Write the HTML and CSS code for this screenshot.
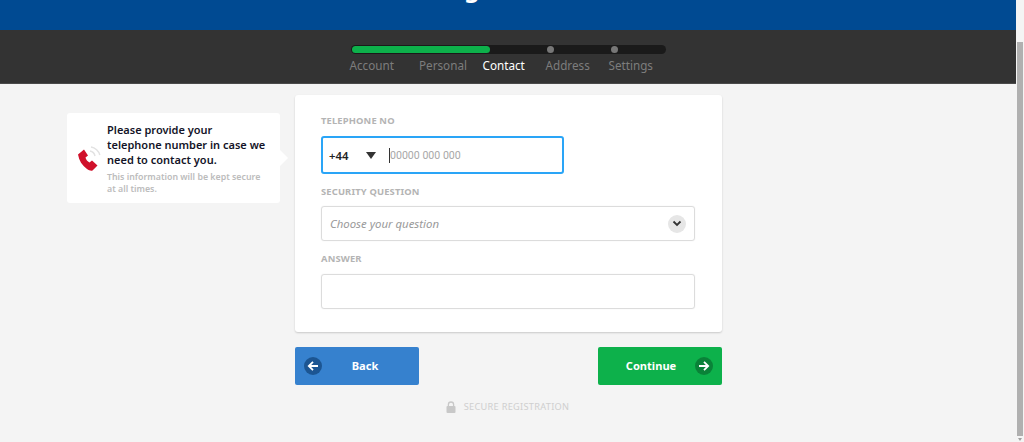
FILE: index.html
```html
<!DOCTYPE html>
<html>
  <head>
    <title>Secure Registration</title>
    <link rel="stylesheet" href="styles.css">
  </head>
  <body>
    <div class="page">
      <div class="page-content">
        <header class="top-bar">
          <h1>Registration</h1>
        </header>

        <nav class="steps-bar">
          <div class="steps">
            <div class="progress">
              <div class="progress-fill"></div>
              <span class="dot dot-address"></span>
              <span class="dot dot-settings"></span>
            </div>
            <div class="step-labels">
              <span class="step step-account">Account</span>
              <span class="step step-personal">Personal</span>
              <span class="step step-contact active">Contact</span>
              <span class="step step-address">Address</span>
              <span class="step step-settings">Settings</span>
            </div>
          </div>
        </nav>

        <main class="main">
          <aside class="tip">
            <svg class="tip-icon" width="24" height="26" viewBox="0 0 24 26">
              <path d="M1 8.5 L7 3.5 L11 9.5 L8.5 11.5 C9 13.5 10.5 15.5 12.5 16.5 L15 14.5 L20.5 19.5 L15.5 24.5 C14 25 12 24.5 10 23 C5 19.5 2 14.5 1 8.5 Z" fill="#d0112b"/>
              <path d="M13 5 C15.5 5.5 17.5 7.5 18 10 M14 1 C18 1.5 22 5 22.8 9" fill="none" stroke="#e2e2e2" stroke-width="1.5"/>
            </svg>
            <div class="tip-text">
              <p class="tip-title">Please provide your telephone number in case we need to contact you.</p>
              <p class="tip-note">This information will be kept secure at all times.</p>
            </div>
          </aside>

          <div class="form-column">
            <form class="card">
              <label class="field-label">TELEPHONE NO</label>
              <div class="phone-input">
                <span class="dial-code">+44</span>
                <span class="dial-arrow"></span>
                <span class="caret"></span>
                <input type="text" placeholder="00000 000 000">
              </div>

              <label class="field-label">SECURITY QUESTION</label>
              <div class="text-box select-box">
                <span class="select-placeholder">Choose your question</span>
                <span class="select-chevron">
                  <svg width="10" height="7" viewBox="0 0 10 7">
                    <path d="M1.5 1.5 L5 5 L8.5 1.5" fill="none" stroke="#333" stroke-width="1.8"/>
                  </svg>
                </span>
              </div>

              <label class="field-label">ANSWER</label>
              <div class="text-box answer-box"></div>
            </form>

            <div class="actions">
              <button type="button" class="btn btn-back">
                <span class="btn-icon">
                  <svg width="12" height="12" viewBox="0 0 12 12">
                    <path d="M11 6 H2 M6 1.8 L1.8 6 L6 10.2" fill="none" stroke="#fff" stroke-width="1.8"/>
                  </svg>
                </span>
                <span class="btn-text">Back</span>
              </button>
              <button type="button" class="btn btn-continue">
                <span class="btn-text">Continue</span>
                <span class="btn-icon">
                  <svg width="12" height="12" viewBox="0 0 12 12">
                    <path d="M1 6 H10 M6 1.8 L10.2 6 L6 10.2" fill="none" stroke="#fff" stroke-width="1.8"/>
                  </svg>
                </span>
              </button>
            </div>

            <div class="secure">
              <svg width="10" height="12" viewBox="0 0 10 12">
                <path d="M2.4 5.5 V3.6 a2.6 2.6 0 0 1 5.2 0 V5.5" fill="none" stroke="#c8c8c8" stroke-width="1.3"/>
                <rect x="0.5" y="5" width="9" height="7" rx="1" fill="#c8c8c8"/>
              </svg>
              <span>SECURE REGISTRATION</span>
            </div>
          </div>
        </main>
      </div>

      <div class="scrollbar">
        <div class="scroll-thumb"></div>
        <div class="scroll-arrow"></div>
      </div>
    </div>
  </body>
</html>
```

FILE: styles.css
```css
html,
body {
  height: 100%;
  margin: 0;
  overflow: hidden;
}
body {
  background-color: #f4f4f4;
  font-family: "Noto Sans", "Open Sans", sans-serif;
  color: #1a1a1a;
}
.page {
  display: flex;
  height: 442px;
}
.page-content {
  flex: 1;
  min-width: 0;
}

/* header */
.top-bar {
  height: 30px;
  overflow: hidden;
  background-color: #004a92;
  text-align: center;
}
.top-bar h1 {
  margin: -27px 0 0;
  font-size: 24px;
  line-height: 30px;
  font-weight: 700;
  color: #fff;
}
.steps-bar {
  height: 53px;
  background-color: #333;
  border-bottom: 1px solid #4a4a4a;
  display: flex;
  justify-content: center;
}
.steps {
  width: 315px;
  padding-top: 15px;
}
.progress {
  position: relative;
  height: 9px;
  background-color: #1a1a1a;
  border-radius: 5px;
}
.progress-fill {
  position: absolute;
  left: 1px;
  top: 1px;
  width: 138px;
  height: 7px;
  background-color: #0db14b;
  border-radius: 4px;
}
.dot {
  position: absolute;
  top: 1px;
  width: 7px;
  height: 7px;
  background-color: #777;
  border-radius: 50%;
}
.dot-address {
  left: 196px;
}
.dot-settings {
  left: 260px;
}
.step-labels {
  display: flex;
  margin-top: 2px;
  font-size: 11.7px;
  line-height: 18px;
  color: #7d7d7d;
}
.step-account {
  width: 69.5px;
  margin-left: -1px;
}
.step-personal {
  width: 63.5px;
}
.step-contact {
  width: 63px;
}
.step-address {
  width: 63px;
}
.step.active {
  color: #fff;
}

/* main area */
.main {
  display: flex;
  align-items: flex-start;
  padding: 11px 0 0 67px;
}
.tip {
  position: relative;
  display: flex;
  align-items: center;
  width: 213px;
  height: 90px;
  box-sizing: border-box;
  margin-top: 18px;
  margin-right: 15px;
  padding-left: 10px;
  background-color: #fff;
  border-radius: 3px;
}
.tip::after {
  content: "";
  position: absolute;
  right: -8px;
  top: 37px;
  border-left: 8px solid #fff;
  border-top: 8px solid transparent;
  border-bottom: 8px solid transparent;
}
.tip-icon {
  flex: none;
  margin-right: 6px;
  margin-top: 2px;
}
.tip-text {
  width: 160px;
}
.tip-title {
  margin: 0;
  font-size: 11px;
  line-height: 15px;
  font-weight: 600;
  color: #141428;
}
.tip-note {
  margin: 4px 0 0;
  font-size: 8.8px;
  line-height: 12px;
  font-weight: 600;
  color: #bcbcbc;
}
.form-column {
  width: 427px;
}
.card {
  height: 237px;
  box-sizing: border-box;
  padding: 19px 27px 0 26px;
  background-color: #fff;
  border-radius: 3px;
  box-shadow: 0 1px 2px rgba(0, 0, 0, 0.18);
}
.field-label {
  display: block;
  font-size: 9.4px;
  line-height: 14px;
  font-weight: 700;
  letter-spacing: 0.15px;
  color: #b4b4b4;
}
.phone-input {
  display: flex;
  align-items: center;
  width: 243px;
  height: 38px;
  box-sizing: border-box;
  margin: 8px 0 11px;
  border: 2px solid #2aa5f7;
  border-radius: 3px;
}
.dial-code {
  width: 37px;
  padding-left: 6px;
  font-size: 11.3px;
  font-weight: 600;
  color: #222;
}
.dial-arrow {
  width: 0;
  height: 0;
  margin-right: 13px;
  border-left: 5.5px solid transparent;
  border-right: 5.5px solid transparent;
  border-top: 7px solid #333;
}
.caret {
  width: 1px;
  height: 15px;
  background-color: #333;
}
.phone-input input {
  flex: 1;
  min-width: 0;
  padding: 0;
  border: none;
  outline: none;
  font-family: "Roboto", sans-serif;
  font-size: 10.6px;
}
.phone-input input::placeholder {
  color: #a8a8a8;
}
.text-box {
  width: 374px;
  box-sizing: border-box;
  border: 1px solid #dcdcdc;
  border-radius: 3px;
  box-shadow: 0 0 1px #dcdcdc;
}
.select-box {
  display: flex;
  align-items: center;
  justify-content: space-between;
  height: 35px;
  margin: 7px 0 11px;
  padding: 0 8px;
}
.select-placeholder {
  font-size: 11.4px;
  font-style: italic;
  color: #9a9a9a;
}
.select-chevron {
  display: flex;
  align-items: center;
  justify-content: center;
  width: 18px;
  height: 18px;
  background-color: #e6e6e6;
  border-radius: 50%;
}
.answer-box {
  height: 35px;
  margin-top: 8px;
}
.actions {
  display: flex;
  justify-content: space-between;
  margin-top: 15px;
}
.btn {
  display: flex;
  align-items: center;
  width: 124px;
  height: 38px;
  box-sizing: border-box;
  padding: 0 9px;
  border: none;
  border-radius: 2px;
  font-family: inherit;
  font-size: 11.1px;
  font-weight: 700;
  color: #fff;
}
.btn-back {
  background-color: #3681ce;
}
.btn-continue {
  background-color: #0db14b;
}
.btn-icon {
  display: flex;
  align-items: center;
  justify-content: center;
  flex: none;
  width: 18px;
  height: 18px;
  border-radius: 50%;
}
.btn-back .btn-icon {
  background-color: #1c5592;
}
.btn-continue .btn-icon {
  background-color: #0a8238;
}
.btn-text {
  flex: 1;
  padding-bottom: 2px;
  text-align: center;
}
.btn-back .btn-text {
  padding-right: 2px;
}
.secure {
  display: flex;
  align-items: center;
  justify-content: center;
  gap: 8px;
  margin-top: 15px;
  padding-right: 2px;
  font-size: 9.2px;
  line-height: 14px;
  letter-spacing: 0.3px;
  color: #cfcfcf;
}

/* scrollbar */
.scrollbar {
  position: relative;
  flex: none;
  width: 8px;
  background-color: #f4f4f4;
}
.scroll-thumb {
  position: absolute;
  left: 1px;
  right: 1px;
  top: 42px;
  bottom: 6px;
  background-color: #b0b0b0;
}
.scroll-arrow {
  position: absolute;
  left: 2px;
  bottom: 1px;
  border-left: 2px solid transparent;
  border-right: 2px solid transparent;
  border-top: 3px solid #a0a0a0;
}
```
